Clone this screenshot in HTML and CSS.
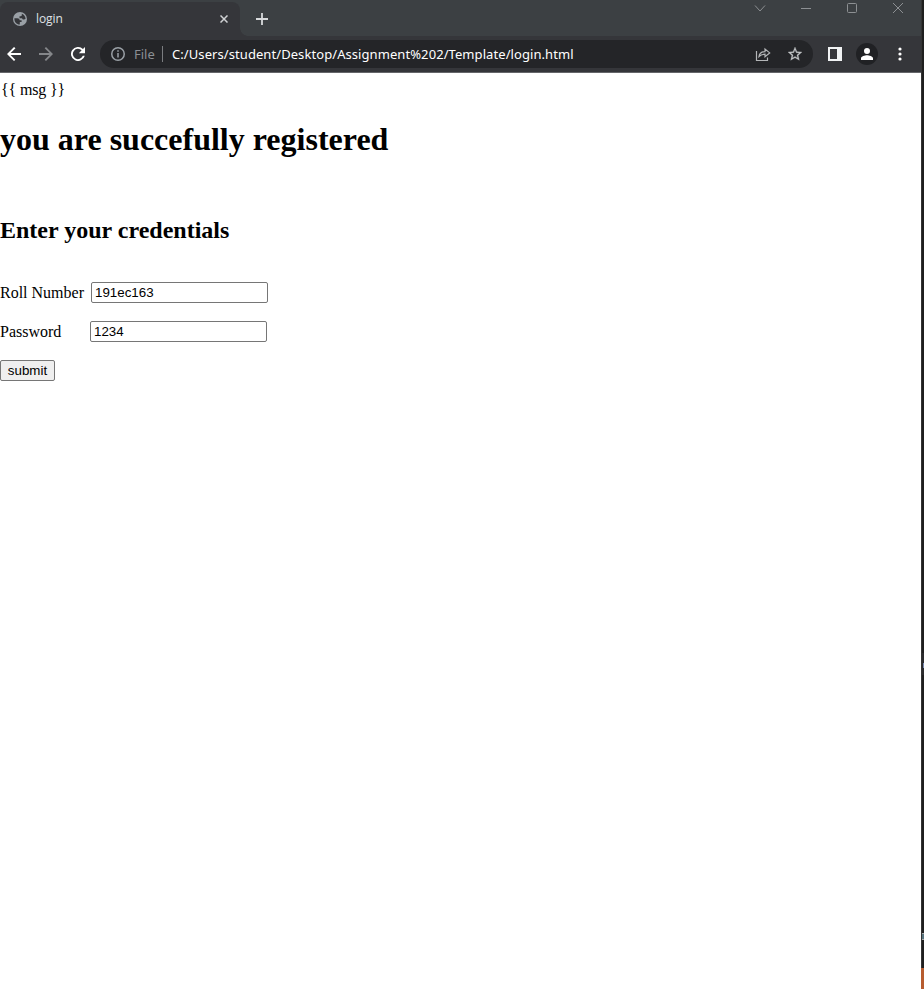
FILE: index.html
```html
<!DOCTYPE html>
<html lang="en">
<head>
<meta charset="utf-8">
<title>login</title>
<link rel="stylesheet" href="styles.css">
</head>
<body>
<div class="window">
  <header class="tabs">
    <div class="tab">
      <svg class="globe" viewBox="0 0 14 14"><circle cx="7" cy="7" r="7" fill="#9aa0a6"/><path fill="#35363a" d="M1.400 6.200h2.900c1.500 0 2.300.7 2.400 2h1.900v1.700H6.800v2.700C3.600 12.500 1.400 10 1.400 7zM8.800 1.700c2.200.8 3.700 2.800 3.800 5.100-.6.600-1.300.8-2.200.7-.8-.1-1.200-.6-1.300-1.300H6.500V4.300h1.200c.8 0 1.200-.5 1.100-1.200z"/></svg>
      <span class="tab-title">login</span>
      <svg class="tab-close" viewBox="0 0 8 8"><path d="M.5.5l7 7M7.5.5l-7 7"/></svg>
    </div>
    <div class="new-tab"><svg viewBox="0 0 12 12"><path d="M6 0v12M0 6h12"/></svg></div>
    <div class="controls">
      <svg viewBox="0 0 12 12"><path d="M1 3.500l5 5.500 5-5.500"/></svg>
      <svg viewBox="0 0 12 12"><path d="M1 6.500h10"/></svg>
      <svg viewBox="0 0 12 12"><rect x="1.500" y="1.500" width="9" height="9" rx="1"/></svg>
      <svg viewBox="0 0 12 12"><path d="M1 1l10 10M11 1L1 11"/></svg>
    </div>
  </header>
  <nav class="toolbar">
    <svg class="nav" viewBox="4 4 16 16"><path fill="#fff" d="M20 10.900H8.200l5.500-5.500L12 4l-8 8 8 8 1.500-1.500-5.400-5.400H20z"/></svg>
    <svg class="nav" viewBox="4 4 16 16"><path fill="#85878a" d="M12 4l-1.500 1.500 5.400 5.400H4v2.200h11.900l-5.400 5.400L12 20l8-8z"/></svg>
    <svg class="nav" viewBox="4 4 16 16"><path fill="#fff" d="M17.650 6.350A8 8 0 1 0 19.730 14h-2.200a5.900 5.900 0 1 1-1.350-6.180L13 11h7V4z"/></svg>
    <div class="address">
      <svg class="info" viewBox="0 0 14 14"><circle cx="7" cy="7" r="6.250"/><path d="M7 6v4.500M7 3.300v1.500"/></svg>
      <span class="scheme">File</span>
      <span class="url">C:/Users/student/Desktop/Assignment%202/Template/login.html</span>
      <svg class="share" viewBox="0 0 16 16"><path d="M1.500 5v9.500h11v-3M4 10.500c.4-3.500 2.500-4.700 6-4.900V3l4.700 3.900L10 10.800V8.200c-2.800 0-4.500.8-6 2.300z"/></svg>
      <svg class="star" viewBox="2 2 20 20"><path fill="#c2c4c6" stroke="#c2c4c6" stroke-width=".4" d="M22 9.240l-7.190-.62L12 2 9.190 8.630 2 9.240l5.460 4.730L5.820 21 12 17.270 18.180 21l-1.630-7.030L22 9.240zM12 15.400l-3.760 2.270 1-4.280-3.320-2.880 4.380-.38L12 6.100l1.710 4.040 4.380.38-3.320 2.880 1 4.280L12 15.400z"/></svg>
    </div>
    <div class="panel-icon"></div>
    <div class="avatar"><svg viewBox="4 4 16 16"><path fill="#fff" d="M12 12a4 4 0 1 0 0-8 4 4 0 0 0 0 8zm0 1.600c-2.670 0-8 1.340-8 4V20h16v-2.400c0-2.660-5.330-4-8-4z"/></svg></div>
    <svg class="more" viewBox="0 0 4 14"><circle cx="2" cy="2" r="1.600"/><circle cx="2" cy="7" r="1.600"/><circle cx="2" cy="12" r="1.600"/></svg>
  </nav>
  <main class="page">
    <div class="msg">{{ msg }}</div>
    <h1>you are succefully registered</h1>
    <h2>Enter your credentials</h2>
    <form>
      <div class="row"><label class="roll" for="roll">Roll Number</label><input id="roll" type="text" value="191ec163"></div>
      <div class="row"><label class="pass" for="pass">Password</label><input id="pass" type="text" value="1234"></div>
      <button type="button">submit</button>
    </form>
  </main>
</div>
<aside class="edge">
  <div class="edge-top"></div>
  <div class="edge-item"><i></i></div>
  <div class="edge-mid"></div>
  <div class="edge-mark"></div>
  <div class="edge-low"></div>
  <div class="edge-status"></div>
</aside>
</body>
</html>
```
FILE: styles.css
```css
* { box-sizing: border-box; }
body { margin: 0; height: 989px; display: flex; overflow: hidden; background: #fff; }
svg { display: block; flex: none; fill: none; }
.window { width: 921px; }
.tabs { height: 36px; display: flex; background: #3c4043; }
.tab { width: 240px; height: 34px; margin-top: 2px; padding: 0 12px 0 13px; display: flex; align-items: center; background: #35363a; border-radius: 8px 8px 0 0; }
.globe { width: 14px; height: 14px; }
.tab-title { margin-left: 9px; font: 12px/16px "Open Sans", sans-serif; color: #dfe1e5; letter-spacing: -.1px; }
.tab-close { width: 8px; height: 8px; margin-left: auto; stroke: #d0d2d4; stroke-width: 1.5; }
.new-tab { width: 30px; height: 36px; padding: 13px 0 0 16px; background: radial-gradient(circle at 8px 0, transparent 7.5px, #35363a 8px) 0 100% / 8px 8px no-repeat; }
.new-tab svg { width: 12px; height: 12px; stroke: #d8dadc; stroke-width: 1.8; }
.controls { margin-left: auto; padding: 2px 17px 0 0; display: flex; gap: 34px; }
.controls svg { width: 12px; height: 12px; stroke: #8d9093; stroke-width: 1; }
.toolbar { height: 37px; display: flex; align-items: center; background: #35363a; border-bottom: 1px solid #65666a; padding-left: 7px; }
.nav { width: 14px; height: 14px; margin-right: 18px; }
.nav + .nav + .nav { margin-right: 15px; }
.address { width: 713px; height: 28px; display: flex; align-items: center; border-radius: 14px; background: #242528; padding: 0 11px; font: 13px/18px "Noto Sans", sans-serif; }
.info { width: 14px; height: 14px; stroke: #9aa0a6; stroke-width: 1.5; }
.scheme { box-sizing: content-box; width: 20px; height: 16px; margin-left: 9px; padding-right: 8px; border-right: 1px solid #7b7d80; color: #8b8f94; line-height: 16px; }
.url { margin-left: 9px; color: #fff; white-space: nowrap; letter-spacing: .075px; }
.share { width: 16px; height: 16px; margin-left: auto; stroke: #b4b6b8; stroke-width: 1.2; }
.star { width: 14px; height: 14px; margin-left: 17px; }
.panel-icon { width: 14px; height: 14px; margin-left: 15px; border: 2px solid #f1f3f4; border-right-width: 5px; }
.avatar { width: 22px; height: 22px; margin-left: 14px; border-radius: 50%; background: #202124; padding: 5px; }
.avatar svg { width: 12px; height: 12px; }
.more { width: 4px; height: 14px; margin-left: 19.5px; fill: #fff; }
.page { padding-top: 8px; color: #000; font: 16px/18px "Liberation Serif", "Times New Roman", serif; }
.msg { height: 18px; padding-left: 1px; letter-spacing: -.15px; }
h1 { margin: 22px 0 0; height: 37px; font-size: 32px; line-height: 37px; }
h2 { margin: 59px 0 0; height: 27px; font-size: 24px; line-height: 27px; }
form { padding-top: 38px; }
.row { height: 21px; margin-bottom: 18px; display: flex; align-items: center; }
.roll { width: 91px; }
.pass { width: 90px; }
input { width: 177px; height: 21px; padding: 1px 3px; border: 1px solid #767676; border-radius: 2px; font: 13.333px "Liberation Sans", Arial, sans-serif; color: #000; background: #fff; }
button { display: block; width: 55px; height: 21px; padding: 0; border: 1px solid #767676; border-radius: 2px; background: #efefef; color: #000; font: 13.333px "Liberation Sans", Arial, sans-serif; }
.edge { width: 3px; display: flex; flex-direction: column; background: #1f1f1f; border-left: 1px solid #343434; }
.edge-top { height: 653px; }
.edge-item { height: 22px; padding-top: 10px; background: #2b2b2d; }
.edge-item i { display: block; margin-left: 1px; height: 5px; background: #7788b0; }
.edge-mid { height: 258px; }
.edge-mark { height: 7px; border: solid #aaa; border-width: 1px 0; background: #55727d; }
.edge-low { flex: 1; }
.edge-status { height: 21px; margin-left: -1px; background: #b75c2f; }
```
